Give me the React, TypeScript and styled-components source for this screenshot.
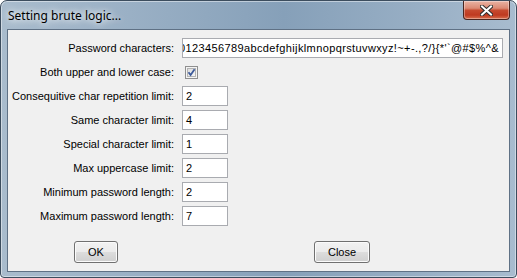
import { Fragment } from 'react';
import styled, { createGlobalStyle } from 'styled-components';

const GlobalStyle = createGlobalStyle`
  html, body {
    margin: 0;
    padding: 0;
    background: #ffffff;
  }
  #root {
    width: 517px;
    height: 278px;
  }
`;

const Window = styled.div`
  box-sizing: border-box;
  width: 517px;
  height: 278px;
  display: flex;
  flex-direction: column;
  padding: 0 6px 5px 6px;
  border: 1px solid #3c4d5e;
  border-radius: 7px 7px 4px 4px;
  background: linear-gradient(
    90deg,
    #a9bccd 0%,
    #9ab0c5 25%,
    #86a0b9 55%,
    #97aec4 80%,
    #a8bccf 100%
  );
  box-shadow: inset 0 0 0 1px rgba(255, 255, 255, 0.45);
`;

const TitleBar = styled.div`
  height: 28px;
  display: flex;
  justify-content: space-between;
  align-items: flex-start;
`;

const Title = styled.span`
  padding-left: 1px;
  line-height: 29px;
  font-family: 'Noto Sans', 'Liberation Sans', sans-serif;
  font-size: 12px;
  color: #000;
  text-shadow: 0 0 6px #fff, 0 0 10px rgba(255, 255, 255, 0.9);
`;

const CloseButton = styled.div`
  box-sizing: border-box;
  width: 47px;
  height: 19px;
  display: flex;
  align-items: center;
  justify-content: center;
  border: 1px solid #4a2620;
  border-top: none;
  border-radius: 0 0 4px 4px;
  background: linear-gradient(
    180deg,
    #e9b3a4 0%,
    #dc8a74 40%,
    #c64a2f 52%,
    #bf3a20 78%,
    #d9704f 100%
  );
  box-shadow: inset 0 0 0 1px rgba(255, 255, 255, 0.35);
`;

const Client = styled.div`
  flex: 1;
  display: flex;
  flex-direction: column;
  padding: 8px 6px 0 0;
  border: 1px solid #5f7185;
  background: #f0f0f0;
  font-family: 'Liberation Sans', Arial, sans-serif;
  font-size: 11px;
  color: #000;
`;

const Form = styled.div`
  display: grid;
  grid-template-columns: 166px 1fr;
  grid-auto-rows: 20px;
  column-gap: 8px;
  row-gap: 4px;
  align-items: center;
`;

const Label = styled.span`
  text-align: right;
  white-space: nowrap;
`;

const Field = styled.div<{ $width?: number }>`
  box-sizing: border-box;
  height: 20px;
  width: ${({ $width }) => ($width ? `${$width}px` : '100%')};
  padding: 0 3px;
  border: 1px solid #a9abb0;
  background: #fff;
  line-height: 18px;
  white-space: nowrap;
  overflow: hidden;
  display: flex;
  justify-content: ${({ $width }) => ($width ? 'flex-start' : 'flex-end')};
  letter-spacing: ${({ $width }) => ($width ? '0' : '0.38px')};
`;

const CheckBox = styled.svg`
  margin-left: 3px;
  display: block;
`;

const ButtonRow = styled.div`
  display: flex;
  margin-top: 15px;
  padding-left: 66px;
  gap: 196px;
`;

const Button = styled.div<{ $width: number }>`
  box-sizing: border-box;
  width: ${({ $width }) => $width}px;
  height: 22px;
  display: flex;
  align-items: center;
  justify-content: center;
  border: 1px solid #707070;
  border-radius: 3px;
  background: linear-gradient(180deg, #f2f2f2 0%, #ebebeb 50%, #dddddd 51%, #cfcfcf 100%);
  box-shadow: inset 0 0 0 1px #fbfbfb;
`;

const fields = [
  { label: 'Consequitive char repetition limit:', value: '2' },
  { label: 'Same character limit:', value: '4' },
  { label: 'Special character limit:', value: '1' },
  { label: 'Max uppercase limit:', value: '2' },
  { label: 'Minimum password length:', value: '2' },
  { label: 'Maximum password length:', value: '7' },
];

const passwordChars = "0123456789abcdefghijklmnopqrstuvwxyz!~+-.,?/}{*'`@#$%^&";

const App = () => (
  <>
    <GlobalStyle />
    <Window>
      <TitleBar>
        <Title>Setting brute logic...</Title>
        <CloseButton>
          <svg width="13" height="11" viewBox="0 0 13 11">
            <path d="M2 1.5 L11 9.5 M11 1.5 L2 9.5" stroke="#2e2e2e" strokeWidth="4" strokeLinecap="square" />
            <path d="M2 1.5 L11 9.5 M11 1.5 L2 9.5" stroke="#ffffff" strokeWidth="2" strokeLinecap="square" />
          </svg>
        </CloseButton>
      </TitleBar>
      <Client>
        <Form>
          <Label>Password characters:</Label>
          <Field>{passwordChars}</Field>
          <Label>Both upper and lower case:</Label>
          <CheckBox width="13" height="13" viewBox="0 0 13 13">
            <defs>
              <linearGradient id="cbg" x1="0" y1="0" x2="1" y2="1">
                <stop offset="0" stopColor="#dcdcdc" />
                <stop offset="1" stopColor="#f7f7f7" />
              </linearGradient>
            </defs>
            <rect x="0.5" y="0.5" width="12" height="12" fill="#f4f4f4" stroke="#8f8f8f" />
            <rect x="2.5" y="2.5" width="8" height="8" fill="url(#cbg)" stroke="#b4b4b4" />
            <path d="M3.5 6.2 L5.6 9 L9.6 3.3" fill="none" stroke="#3d5a9a" strokeWidth="1.8" />
          </CheckBox>
          {fields.map(({ label, value }) => (
            <Fragment key={label}>
              <Label>{label}</Label>
              <Field $width={46}>{value}</Field>
            </Fragment>
          ))}
        </Form>
        <ButtonRow>
          <Button $width={44}>OK</Button>
          <Button $width={56}>Close</Button>
        </ButtonRow>
      </Client>
    </Window>
  </>
);

export default App;
